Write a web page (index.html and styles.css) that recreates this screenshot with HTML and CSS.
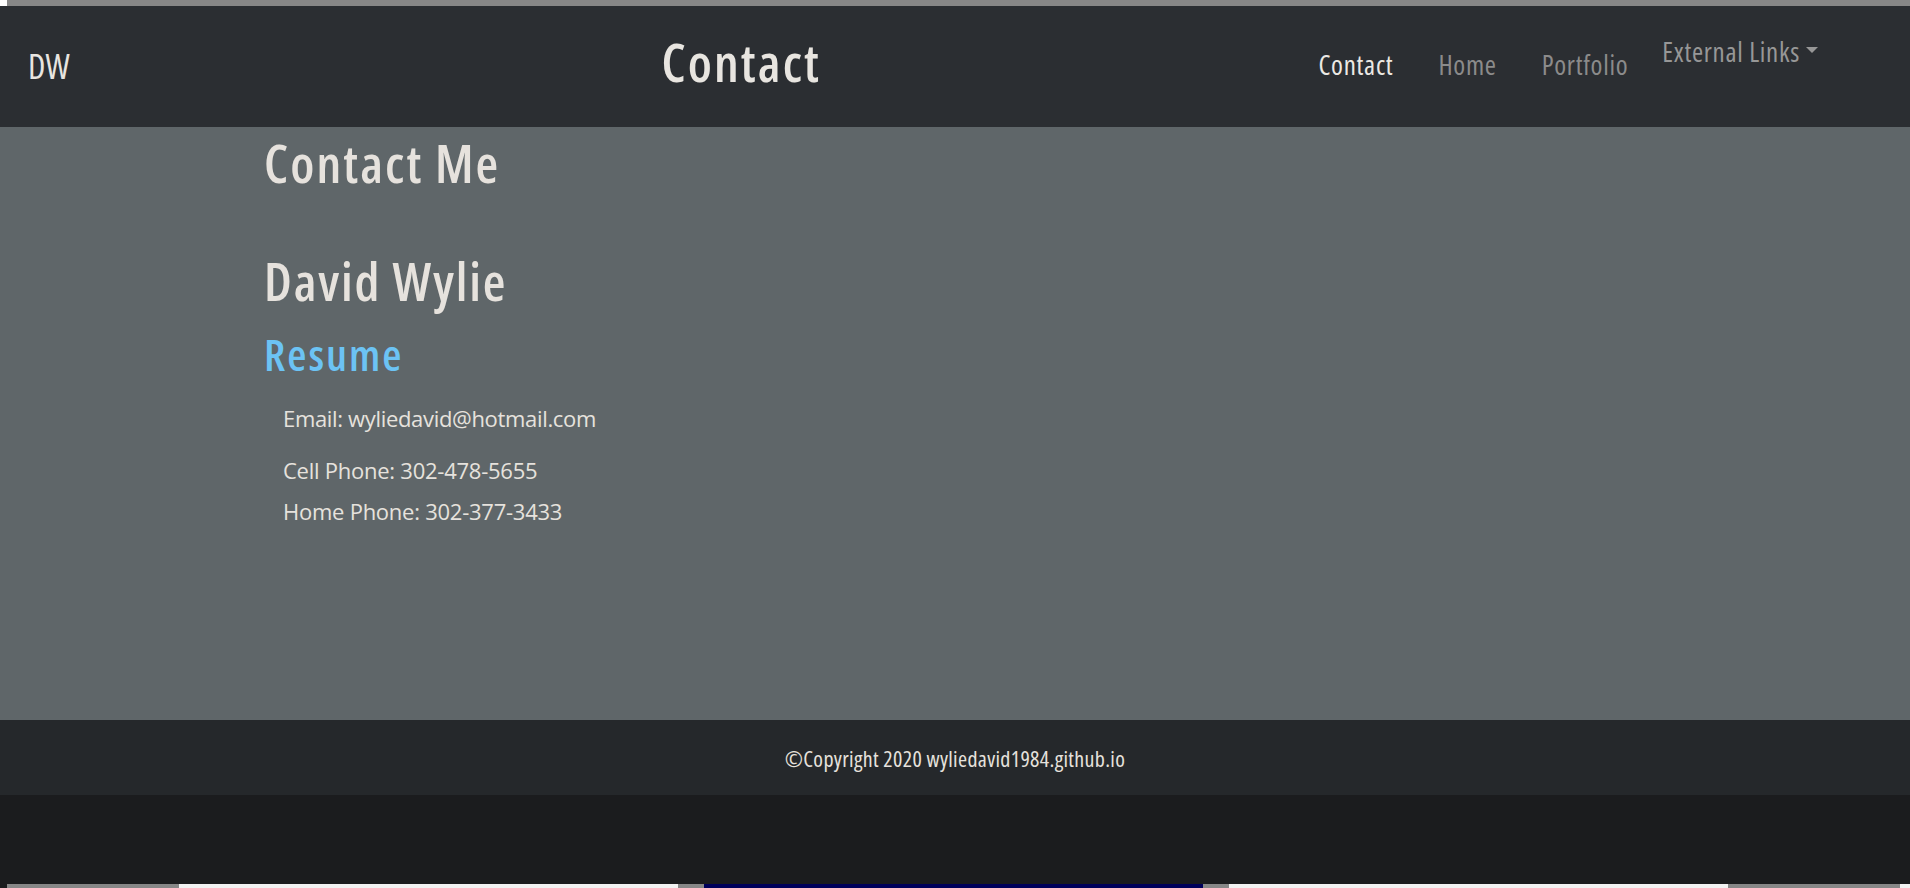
FILE: index.html
```html
<!DOCTYPE html>
<html lang="en">
<head>
<meta charset="utf-8">
<title>Contact</title>
<link rel="stylesheet" href="styles.css">
</head>
<body>
<div class="topline"><span class="corner"></span></div>
<nav class="navbar">
  <a class="brand" href="#">DW</a>
  <h1 class="page-title">Contact</h1>
  <ul class="nav-links">
    <li><a class="nav-link active" href="#">Contact</a></li>
    <li><a class="nav-link" href="#">Home</a></li>
    <li><a class="nav-link" href="#">Portfolio</a></li>
    <li class="dropdown"><a class="nav-link dropdown-toggle" href="#">External Links</a></li>
  </ul>
</nav>
<main class="content">
  <h1 class="heading">Contact Me</h1>
  <h2 class="name">David Wylie</h2>
  <a class="resume" href="#">Resume</a>
  <p class="email">Email: wyliedavid@hotmail.com</p>
  <p class="phone cell">Cell Phone: 302-478-5655</p>
  <p class="phone home">Home Phone: 302-377-3433</p>
</main>
<footer class="footer">
  <p class="copyright">©Copyright 2020 wyliedavid1984.github.io</p>
</footer>
<div class="below"></div>
<div class="strip">
  <span class="seg gray s1"></span>
  <span class="seg white s2"></span>
  <span class="seg gray s3"></span>
  <span class="seg navy s4"></span>
  <span class="seg gray s5"></span>
  <span class="seg white s6"></span>
  <span class="seg gray s7"></span>
  <span class="seg white s8"></span>
</div>
</body>
</html>
```

FILE: styles.css
```css
html, body {
  margin: 0;
  padding: 0;
}
body {
  width: 1910px;
  height: 888px;
  overflow: hidden;
  background: #1b1c1e;
  font-family: "Open Sans", "Noto Sans", sans-serif;
  display: flex;
  flex-direction: column;
}
a { text-decoration: none; }
h1, h2, p, ul { margin: 0; padding: 0; }

.topline {
  height: 6px;
  flex: none;
  background: #878787;
  display: flex;
}
.corner {
  width: 7px;
  background: #ffffff;
}

.navbar {
  flex: none;
  height: 121px;
  background: #2b2e32;
  display: flex;
  align-items: flex-start;
  padding: 0 92px 0 28px;
}
.brand {
  font-size: 34px;
  font-stretch: 75%;
  line-height: 1;
  color: #e8e5e0;
  margin-top: 43px;
}
.page-title {
  font-size: 52px;
  font-weight: 600;
  font-stretch: 75%;
  letter-spacing: 2.1px;
  line-height: 1;
  color: #e8e5e0;
  margin-top: 30px;
  margin-left: 592px;
}
.nav-links {
  list-style: none;
  display: flex;
  align-items: flex-start;
  margin-left: auto;
}
.nav-links li + li { margin-left: 45px; }
.nav-links li.dropdown { margin-left: 34px; }
.nav-link {
  display: block;
  font-size: 27px;
  font-stretch: 75%;
  letter-spacing: 0.7px;
  line-height: 1;
  color: #8b8b8b;
  margin-top: 45px;
}
.nav-link.active {
  color: #ece9e4;
}
.dropdown-toggle {
  margin-top: 32px;
  color: #979797;
  display: flex;
  align-items: center;
  gap: 6px;
}
.dropdown-toggle::after {
  content: "";
  border-top: 6px solid #979797;
  border-left: 6px solid transparent;
  border-right: 6px solid transparent;
  margin-top: -4px;
}

.content {
  flex: none;
  height: 593px;
  background: #5f6669;
  padding-left: 264px;
  box-sizing: border-box;
  display: flex;
  flex-direction: column;
  align-items: flex-start;
  color: #e6e2dd;
}
.heading, .name {
  font-size: 52px;
  font-weight: 600;
  font-stretch: 75%;
  line-height: 1;
}
.heading { margin-top: 10px; letter-spacing: 2.1px; }
.name { margin-top: 66px; letter-spacing: 1.8px; }
.resume {
  font-size: 44px;
  font-weight: 600;
  font-stretch: 75%;
  letter-spacing: 2px;
  line-height: 1;
  color: #6cc3f4;
  margin-top: 25px;
}
.email, .phone {
  font-size: 22px;
  letter-spacing: -0.25px;
  line-height: 1;
  margin-left: 19px;
}
.email { margin-top: 30.5px; letter-spacing: -0.33px; }
.cell { margin-top: 30px; }
.home { margin-top: 19px; }

.footer {
  flex: none;
  height: 75px;
  background: #25282b;
  display: flex;
  align-items: center;
  justify-content: center;
}
.copyright {
  font-size: 22px;
  font-stretch: 75%;
  letter-spacing: 0.33px;
  line-height: 1;
  color: #e6e2dd;
}

.below {
  flex: 1;
  background: #1b1c1e;
}
.strip {
  flex: none;
  height: 4px;
  display: flex;
  background: #1b1c1e;
}
.seg { display: block; height: 100%; }
.gray { background: #878787; }
.white { background: #f2f2f2; }
.navy { background: #00005a; }
.s1 { width: 172px; margin-left: 7px; }
.s2 { width: 499px; }
.s3 { width: 26px; }
.s4 { width: 499px; }
.s5 { width: 26px; }
.s6 { width: 499px; }
.s7 { width: 172px; }
.s8 { width: 10px; }
```
